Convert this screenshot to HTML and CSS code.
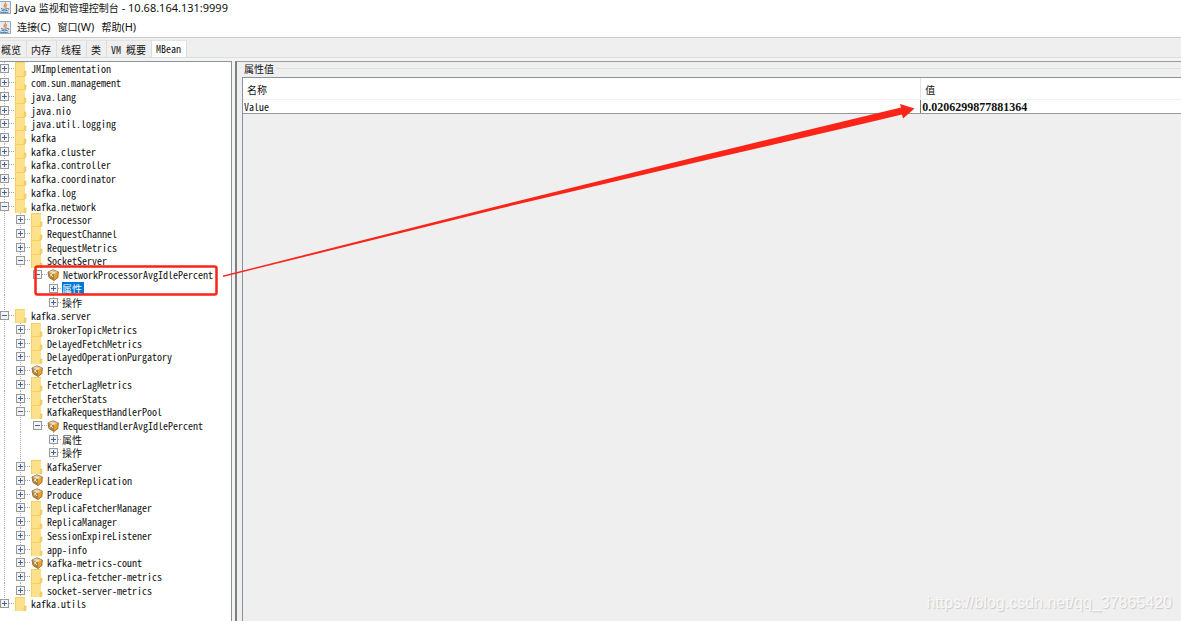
FILE: index.html
```html
<!DOCTYPE html>
<html lang="zh-CN">
<head>
<meta charset="utf-8">
<title>Java 监视和管理控制台</title>
<link rel="stylesheet" href="styles.css">
</head>
<body>
<svg class="defs" aria-hidden="true">
  <symbol id="folder" viewBox="0 0 12 14"><path d="M0 0h10v9h1v4l-1 1H0z" fill="#fde08a"/><path d="M0 0h10v1H1v13H0z" fill="#f5d05e"/><path d="M9.500 9h1.500v4l-1 1H9z" fill="#f9dc70" stroke="#e6bd4a" stroke-width=".6"/></symbol>
  <symbol id="bean" viewBox="0 0 12 12"><path d="M1 3 6 .8 11.300 3l-.5 5.500L7 11.500 2 8.500z" fill="#e8a02d" stroke="#74501d" stroke-width=".8"/><path d="M1 3 6 1l5 2-4 2.500z" fill="#d9c49c"/><path d="M1 3l6 2.500V11L2 8.500z" fill="#a9803f"/><path d="M3 4.500 6 8M6 3.500 3 7.500M4 2.500l4 1.500" stroke="#f8edcf" stroke-width="1"/><path d="m8 6 2.500-1.500-.3 3.500L8 9.500z" fill="#ff9d08"/></symbol>
  <symbol id="java" viewBox="0 0 11 13"><path d="M-4 .5h14.500v12H-4z" fill="#e4edf5" stroke="#8fa9c0"/><path d="M5 1.500c2 2-2.500 2.500-.5 5M7 3.500C4.500 5 7 5.500 5.500 7" fill="none" stroke="#e77d27" stroke-width="1.200"/><path d="M1 7.500c2 1 4.500 1 6.500 0M1.500 9.300c2 .8 4 .8 5.500 0M0 11c3 1 6 .8 8.500 0M7.500 7.500c2-.5 1.500 1.500 0 2" fill="none" stroke="#4d7596"/></symbol>
</svg>
<div class="app">
  <header class="title"><svg class="java"><use href="#java"/></svg><span>Java <span class="han">监视和管理控制台</span> - 10.68.164.131:9999</span></header>
  <nav class="menu"><svg class="java"><use href="#java"/></svg><button><span class="han">连接</span>(C)</button><button><span class="han">窗口</span>(W)</button><button><span class="han">帮助</span>(H)</button></nav>
  <div class="tabs" role="tablist">
    <button role="tab">概览</button><button role="tab">内存</button><button role="tab">线程</button><button role="tab">类</button><button role="tab">VM 概要</button><button role="tab" class="on" aria-selected="true">MBean</button>
  </div>
  <main class="split">
    <ul class="tree" role="tree">
      <li class="l0"><button class="x" aria-label="展开"></button><svg class="f"><use href="#folder"/></svg><span>JMImplementation</span></li>
      <li class="l0"><button class="x" aria-label="展开"></button><svg class="f"><use href="#folder"/></svg><span>com.sun.management</span></li>
      <li class="l0"><button class="x" aria-label="展开"></button><svg class="f"><use href="#folder"/></svg><span>java.lang</span></li>
      <li class="l0"><button class="x" aria-label="展开"></button><svg class="f"><use href="#folder"/></svg><span>java.nio</span></li>
      <li class="l0"><button class="x" aria-label="展开"></button><svg class="f"><use href="#folder"/></svg><span>java.util.logging</span></li>
      <li class="l0"><button class="x" aria-label="展开"></button><svg class="f"><use href="#folder"/></svg><span>kafka</span></li>
      <li class="l0"><button class="x" aria-label="展开"></button><svg class="f"><use href="#folder"/></svg><span>kafka.cluster</span></li>
      <li class="l0"><button class="x" aria-label="展开"></button><svg class="f"><use href="#folder"/></svg><span>kafka.controller</span></li>
      <li class="l0"><button class="x" aria-label="展开"></button><svg class="f"><use href="#folder"/></svg><span>kafka.coordinator</span></li>
      <li class="l0"><button class="x" aria-label="展开"></button><svg class="f"><use href="#folder"/></svg><span>kafka.log</span></li>
      <li class="l0"><button class="x open" aria-label="折叠"></button><svg class="f"><use href="#folder"/></svg><span>kafka.network</span></li>
      <li class="l1"><button class="x" aria-label="展开"></button><svg class="f"><use href="#folder"/></svg><span>Processor</span></li>
      <li class="l1"><button class="x" aria-label="展开"></button><svg class="f"><use href="#folder"/></svg><span>RequestChannel</span></li>
      <li class="l1"><button class="x" aria-label="展开"></button><svg class="f"><use href="#folder"/></svg><span>RequestMetrics</span></li>
      <li class="l1"><button class="x open" aria-label="折叠"></button><svg class="f"><use href="#folder"/></svg><span>SocketServer</span></li>
      <li class="l2"><button class="x open" aria-label="折叠"></button><svg class="b"><use href="#bean"/></svg><span>NetworkProcessorAvgIdlePercent</span></li>
      <li class="l3"><button class="x" aria-label="展开"></button><span class="cn sel">属性</span></li>
      <li class="l3"><button class="x" aria-label="展开"></button><span class="cn">操作</span></li>
      <li class="l0"><button class="x open" aria-label="折叠"></button><svg class="f"><use href="#folder"/></svg><span>kafka.server</span></li>
      <li class="l1"><button class="x" aria-label="展开"></button><svg class="f"><use href="#folder"/></svg><span>BrokerTopicMetrics</span></li>
      <li class="l1"><button class="x" aria-label="展开"></button><svg class="f"><use href="#folder"/></svg><span>DelayedFetchMetrics</span></li>
      <li class="l1"><button class="x" aria-label="展开"></button><svg class="f"><use href="#folder"/></svg><span>DelayedOperationPurgatory</span></li>
      <li class="l1"><button class="x" aria-label="展开"></button><svg class="b"><use href="#bean"/></svg><span>Fetch</span></li>
      <li class="l1"><button class="x" aria-label="展开"></button><svg class="f"><use href="#folder"/></svg><span>FetcherLagMetrics</span></li>
      <li class="l1"><button class="x" aria-label="展开"></button><svg class="f"><use href="#folder"/></svg><span>FetcherStats</span></li>
      <li class="l1"><button class="x open" aria-label="折叠"></button><svg class="f"><use href="#folder"/></svg><span>KafkaRequestHandlerPool</span></li>
      <li class="l2 more"><button class="x open" aria-label="折叠"></button><svg class="b"><use href="#bean"/></svg><span>RequestHandlerAvgIdlePercent</span></li>
      <li class="l3 more"><button class="x" aria-label="展开"></button><span class="cn">属性</span></li>
      <li class="l3 more"><button class="x" aria-label="展开"></button><span class="cn">操作</span></li>
      <li class="l1"><button class="x" aria-label="展开"></button><svg class="f"><use href="#folder"/></svg><span>KafkaServer</span></li>
      <li class="l1"><button class="x" aria-label="展开"></button><svg class="b"><use href="#bean"/></svg><span>LeaderReplication</span></li>
      <li class="l1"><button class="x" aria-label="展开"></button><svg class="b"><use href="#bean"/></svg><span>Produce</span></li>
      <li class="l1"><button class="x" aria-label="展开"></button><svg class="f"><use href="#folder"/></svg><span>ReplicaFetcherManager</span></li>
      <li class="l1"><button class="x" aria-label="展开"></button><svg class="f"><use href="#folder"/></svg><span>ReplicaManager</span></li>
      <li class="l1"><button class="x" aria-label="展开"></button><svg class="f"><use href="#folder"/></svg><span>SessionExpireListener</span></li>
      <li class="l1"><button class="x" aria-label="展开"></button><svg class="f"><use href="#folder"/></svg><span>app-info</span></li>
      <li class="l1"><button class="x" aria-label="展开"></button><svg class="b"><use href="#bean"/></svg><span>kafka-metrics-count</span></li>
      <li class="l1"><button class="x" aria-label="展开"></button><svg class="f"><use href="#folder"/></svg><span>replica-fetcher-metrics</span></li>
      <li class="l1"><button class="x" aria-label="展开"></button><svg class="f"><use href="#folder"/></svg><span>socket-server-metrics</span></li>
      <li class="l0"><button class="x" aria-label="展开"></button><svg class="f"><use href="#folder"/></svg><span>kafka.utils</span></li>
    </ul>
    <section class="detail">
      <h2><span>属性值</span></h2>
      <div class="pane">
        <table>
          <colgroup><col class="name"><col></colgroup>
          <thead><tr><th>名称</th><th>值</th></tr></thead>
          <tbody><tr><td class="key">Value</td><td class="val">0.0206299877881364</td></tr></tbody>
        </table>
      </div>
    </section>
  </main>
  <svg class="notes" width="920" height="300" viewBox="0 0 920 300" aria-hidden="true">
    <rect x="35.500" y="266.500" width="181" height="28" rx="2" fill="none" stroke="#fb2418" stroke-width="2.500"/>
    <path d="M223 275.500 500 205.500 700 156 901 107.500 900 104 914.500 108.500 903 118.500 902 114.500 860 124.500 700 161.500 500 208.500 223 277z" fill="#fb2418"/>
  </svg>
  <div class="mark">https://blog.csdn.net/qq_37865420</div>
</div>
</body>
</html>
```
FILE: styles.css
```css
* { box-sizing: border-box; }
body { margin: 0; background: #efefef; color: #111; font-family: "Noto Sans", "Noto Sans CJK SC", sans-serif; font-size: 11px; }
button { border: 0; padding: 0; background: none; color: inherit; font: inherit; white-space: nowrap; }
.han { font-size: 10px; }
.defs { display: block; width: 0; height: 0; }
.app { position: relative; display: flex; flex-direction: column; min-height: 100vh; overflow: hidden; }
.title, .menu { display: flex; align-items: center; background: #fff; line-height: 16px; }
.title { height: 17px; gap: 4px; padding-bottom: 2px; }
.menu { height: 21px; gap: 7px; border-bottom: 1px solid #ccc; }
.menu .java { margin-right: -1px; }
.java { width: 11px; height: 13px; flex: none; }
.tabs { display: flex; align-items: flex-end; height: 19px; padding-top: 2px; font: 10px/18px "Noto Sans CJK SC", sans-serif; font-feature-settings: "hwid"; }
.tabs button { height: 17px; padding: 1px 5px 0 4px; border-right: 1px solid #dcdcdc; border-top: 1px solid #e4e4e4; line-height: 16px; }
.tabs button:first-child { padding-left: 1px; }
.tabs .on { padding: 0 5px 1px 4px; background: #fff; line-height: 14px; }
.split { display: flex; flex: 1; padding-top: 3px; border-top: 1px solid #ddd; background: #f4f4f4; }
.tree { display: flex; flex-direction: column; width: 232px; flex: none; margin: 0; padding: 0 0 10px; list-style: none; background: #fff; border-top: 1px solid #8c929c; border-right: 1px solid #8c929c; font: 10px/13px "Noto Sans CJK SC", monospace; font-feature-settings: "hwid"; }
.tree li {
  --dots: repeating-linear-gradient(#aaa 0 1px, transparent 1px 2px);
  display: flex; flex: 1 0 13px; align-items: center; height: 13px; white-space: nowrap;
  background-repeat: no-repeat; background-size: 1px 100%;
}
.tree .l0 { background-image: var(--dots); background-position: 4px 0; }
.tree .l1 { padding-left: 16px; background-image: var(--dots), var(--dots); background-position: 4px 0, 20px 0; }
.tree .l2 { padding-left: 33px; background-image: var(--dots); background-position: 4px 0; }
.tree .l3 { padding-left: 49px; background-image: var(--dots), var(--dots); background-position: 4px 0, 53px 0; }
.tree .l2.more { background-image: var(--dots), var(--dots); background-position: 4px 0, 20px 0; }
.tree .l3.more { background-image: var(--dots), var(--dots), var(--dots); background-position: 4px 0, 20px 0, 53px 0; }
.tree li:last-child { background-size: 1px 50%; }
.x { flex: none; width: 15px; height: 9px; background:
  linear-gradient(#4264a5, #4264a5) 2px 4px / 5px 1px no-repeat,
  linear-gradient(#4264a5, #4264a5) 4px 2px / 1px 5px no-repeat,
  linear-gradient(#f3f3f3, #f3f3f3) 1px 1px / 7px 7px no-repeat,
  linear-gradient(#999, #999) 0 0 / 9px 9px no-repeat,
  repeating-linear-gradient(90deg, #aaa 0 1px, transparent 1px 2px) 9px 4px / 5px 1px no-repeat; }
.x.open { background:
  linear-gradient(#4264a5, #4264a5) 2px 4px / 5px 1px no-repeat,
  linear-gradient(#f3f3f3, #f3f3f3) 1px 1px / 7px 7px no-repeat,
  linear-gradient(#999, #999) 0 0 / 9px 9px no-repeat,
  repeating-linear-gradient(90deg, #aaa 0 1px, transparent 1px 2px) 9px 4px / 5px 1px no-repeat; }
.f { flex: none; width: 12px; height: 14px; margin-right: 4px; }
.b { flex: none; width: 12px; height: 12px; margin-right: 4px; }
.l2 .x { width: 14px; }
.l3 .x { width: 13px; }
.sel { background: #0078d7; color: #fff; padding-right: 2px; }
.detail { flex: 1; min-width: 0; margin-left: 3px; padding-left: 5px; border-left: 2px solid #7f7f7f; border-top: 1px solid #999; background: #efefef; display: flex; flex-direction: column; }
.detail h2 { display: flex; align-items: center; gap: 2px; height: 15px; margin: 0; padding: 0 0 2px 2px; font: 10px/13px "Noto Sans CJK SC", sans-serif; }
.detail h2::after { content: ""; flex: 1; height: 1px; background: #e0e0e0; }
.pane { flex: 1; border-left: 1px solid #8c929c; border-top: 1px solid #8c929c; }
table { width: 100%; table-layout: fixed; border-collapse: separate; border-spacing: 0; background: #fff; border-bottom: 1px solid #999; font: 10px/13px "Noto Sans CJK SC", monospace; }
.name { width: 72.200%; }
th { height: 22px; padding: 2px 4px 0; text-align: left; font-weight: 400; border-bottom: 1px solid #f3f3f3; }
th + th { border-left: 1px solid #e5e5e5; }
td { height: 13px; padding: 0 1px; line-height: 12px; }
.key { font-feature-settings: "hwid"; }
.val { border-left: 1px solid #777; font: 700 12px/12px "Liberation Serif", serif; }
.notes { position: absolute; left: 0; top: 0; pointer-events: none; }
.mark { position: absolute; right: 9px; bottom: 9px; font: 16px/18px "Liberation Sans", sans-serif; color: #f8f8f8; text-shadow: 1px 1px 1px #c8c8c8; }
```
